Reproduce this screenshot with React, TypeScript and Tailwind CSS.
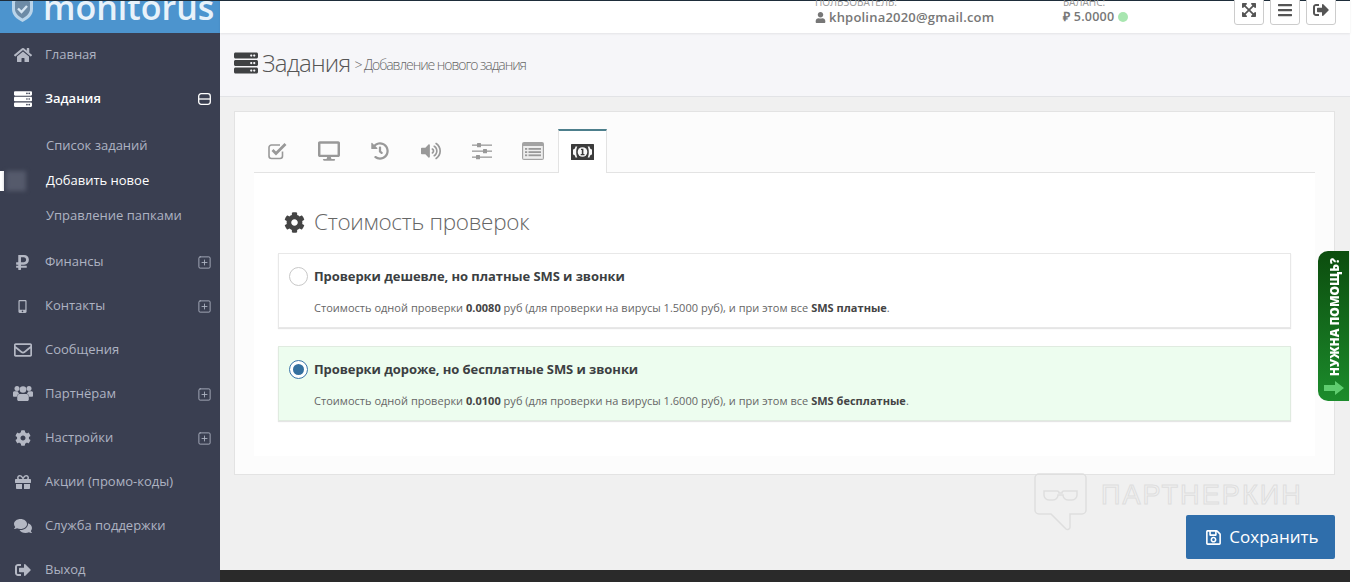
import React from 'react';
import { SquarePlus } from 'lucide-react';
import {
  FaCog,
  FaComments,
  FaDesktop,
  FaExpandArrowsAlt,
  FaBars,
  FaGift,
  FaHistory,
  FaHome,
  FaMobileAlt,
  FaRegEnvelope,
  FaRegSave,
  FaRubleSign,
  FaServer,
  FaSignOutAlt,
  FaUser,
  FaVolumeUp,
} from 'react-icons/fa';

const UsersIcon = ({ size = 20, className }: { size?: number; className?: string }) => (
  <svg width={size} height={size} viewBox="0 0 20 20" fill="currentColor" className={className}>
    <circle cx="4" cy="4.500" r="2.500" />
    <circle cx="16" cy="4.500" r="2.500" />
    <circle cx="10" cy="5.500" r="3.300" />
    <path d="M0 8.500c0-1 1-1.300 2-1.300h2.600c.3 1 1 1.800 1.600 2.300-1.400.7-2.200 1.800-2.400 3.300H1c-.6 0-1-.4-1-1ZM20 8.500c0-1-1-1.300-2-1.300h-2.600c-.3 1-1 1.800-1.600 2.300 1.400.7 2.200 1.800 2.400 3.300H19c.6 0 1-.4 1-1Z" />
    <path d="M6.500 10h7c1.500 0 2.300 1.300 2.300 3v2.500c0 .8-.6 1.500-1.500 1.500H5.700c-.9 0-1.500-.7-1.500-1.500V13c0-1.700.8-3 2.300-3Z" />
  </svg>
);

const CheckIcon = () => (
  <svg width="20" height="18" viewBox="0 0 20 18" fill="none" stroke="currentColor">
    <path d="M14.500 9.500V14a2.500 2.500 0 0 1-2.500 2.500H3.500A2.500 2.500 0 0 1 1 14V5.500A2.500 2.500 0 0 1 3.500 3H12" strokeWidth="1.600" />
    <path d="m4.500 8 3.500 3.500 9.500-9.500" strokeWidth="2.800" />
  </svg>
);

const SlidersIcon = () => (
  <svg width="20" height="18" viewBox="0 0 20 18" fill="currentColor">
    <rect x="0" y="2.500" width="20" height="1.300" />
    <rect x="0" y="8.500" width="20" height="1.300" />
    <rect x="0" y="14.500" width="20" height="1.300" />
    <rect x="5" y="1" width="4" height="4.200" rx="0.500" />
    <rect x="11" y="7" width="4" height="4.200" rx="0.500" />
    <rect x="4" y="13" width="4" height="4.200" rx="0.500" />
  </svg>
);

const ListAltIcon = () => (
  <svg width="22" height="18" viewBox="0 0 22 18">
    <rect x="0" y="0" width="22" height="18" rx="2" fill="#a3a3a3" />
    <rect x="1.200" y="4" width="19.600" height="12.800" fill="#eeeeee" />
    <g fill="#999999">
      <rect x="3" y="6" width="2.200" height="1.800" />
      <rect x="3" y="9.200" width="2.200" height="1.800" />
      <rect x="3" y="12.400" width="2.200" height="1.800" />
      <rect x="6.500" y="6" width="12.500" height="1.800" />
      <rect x="6.500" y="9.200" width="12.500" height="1.800" />
      <rect x="6.500" y="12.400" width="12.500" height="1.800" />
    </g>
  </svg>
);

const MoneyIcon = () => (
  <svg width="23" height="16" viewBox="0 0 23 16">
    <rect width="23" height="16" rx="0.500" fill="#3c3c3c" />
    <path d="M2 5.500c1.300 0 2.200-1 2.500-3h1.800C5.500 4.300 5.200 6 5.200 8s.3 3.700 1.100 5.500H4.500c-.3-2-1.200-3-2.500-3ZM21 5.500c-1.300 0-2.200-1-2.500-3h-1.800c.8 1.800 1.100 3.500 1.100 5.500s-.3 3.700-1.100 5.500h1.800c.3-2 1.200-3 2.500-3Z" fill="#fafafa" />
    <circle cx="11.500" cy="8" r="4.800" fill="#fafafa" />
    <path d="M10 4.800h2.400v5.300h1.100v1.200H9.700v-1.200h1.100V6.100H10Z" fill="#3c3c3c" />
  </svg>
);

const NAV_TOP = [{ label: 'Главная', icon: FaHome, size: 18 }];

const NAV_BOTTOM = [
  { label: 'Финансы', icon: FaRubleSign, size: 17, plus: true },
  { label: 'Контакты', icon: FaMobileAlt, size: 13, plus: true },
  { label: 'Сообщения', icon: FaRegEnvelope, size: 18 },
  { label: 'Партнёрам', icon: UsersIcon, size: 20, plus: true },
  { label: 'Настройки', icon: FaCog, size: 16, plus: true },
  { label: 'Акции (промо-коды)', icon: FaGift, size: 16 },
  { label: 'Служба поддержки', icon: FaComments, size: 18 },
  { label: 'Выход', icon: FaSignOutAlt, size: 16 },
];

const NavItem = ({
  label,
  icon: Icon,
  size,
  plus,
}: {
  label: string;
  icon: React.ElementType;
  size: number;
  plus?: boolean;
}) => (
  <div className="flex h-[44px] shrink-0 items-center text-[13px] text-[#aeb3c2]">
    <div className="flex w-[45px] justify-center">
      <Icon size={size} className="text-[#b4b8c4]" />
    </div>
    <span className="flex-1">{label}</span>
    {plus && <SquarePlus size={15} strokeWidth={1.4} className="mr-[8px]" />}
  </div>
);

const Option = ({
  title,
  price,
  virus,
  sms,
  active,
}: {
  title: string;
  price: string;
  virus: string;
  sms: string;
  active?: boolean;
}) => (
  <div
    className={
      active
        ? 'h-[75px] border border-[#e0ebe0] bg-[#edfdef] pl-[10px] shadow-[0_1px_1px_rgba(0,0,0,0.1)]'
        : 'h-[75px] border border-[#e8e8e8] bg-white pl-[10px] shadow-[0_1px_1px_rgba(0,0,0,0.1)]'
    }
  >
    <div className="flex items-center gap-[6px] pt-[13px]">
      {active ? (
        <span className="flex h-[19px] w-[19px] items-center justify-center rounded-full border border-[#3a74a8] bg-white">
          <span className="h-[11px] w-[11px] rounded-full bg-[#34709f]" />
        </span>
      ) : (
        <span className="h-[19px] w-[19px] rounded-full border border-[#c8c8c8] bg-white" />
      )}
      <span className="-mt-[2px] text-[13px] leading-[18px] font-bold tracking-[-0.07px] text-[#3c3f42]">{title}</span>
    </div>
    <p className="mt-[14px] pl-[25px] text-[11px] leading-[16px] tracking-[0.02px] text-[#666]">
      Стоимость одной проверки <b className="text-[#444]">{price}</b> руб (для проверки на вирусы {virus} руб), и при
      этом все <b className="text-[#444]">SMS {sms}</b>.
    </p>
  </div>
);

export default function App() {
  return (
    <div className="flex h-[582px] w-[1353px] overflow-hidden bg-white font-['Open_Sans',sans-serif]">
      {/* Sidebar */}
      <aside className="flex h-full w-[220px] shrink-0 flex-col overflow-hidden bg-[#3a3f51]">
        <div className="flex h-[33px] shrink-0 items-end overflow-hidden border-t border-[#1e2d3a] bg-[#4c94ce] pl-[12px]">
          <svg width="21" height="26" viewBox="0 0 21 26" className="mb-[11px] shrink-0">
            <path d="M10.500 0 21 3v10c0 6-4.500 10-10.500 13C4.500 23 0 19 0 13V3Z" fill="#b9d4ea" />
            <path d="M10.500 3 18 5.500V13c0 4-3 7-7.500 9.500C6 20 3 17 3 13V5.500Z" fill="#6d8ba6" />
            <path d="m6 12.500 3.500 3.500 5.500-6" fill="none" stroke="#d5e5f2" strokeWidth="2.400" />
          </svg>
          <span className="mb-[7px] ml-[10px] text-[34px] leading-[37px] font-semibold whitespace-nowrap text-[#e8f2fa]">
            monitorus
          </span>
        </div>
        {NAV_TOP.map((item) => (
          <NavItem key={item.label} {...item} />
        ))}
        <div className="flex h-[44px] shrink-0 items-center text-[13px] font-semibold text-white">
          <div className="flex w-[45px] justify-center">
            <FaServer size={18} />
          </div>
          <span className="flex-1">Задания</span>
          <svg width="13" height="12" viewBox="0 0 13 12" fill="none" stroke="currentColor" className="mr-[9px]">
            <rect x="0.700" y="0.700" width="11.600" height="10.600" rx="2.500" strokeWidth="1.300" />
            <path d="M1 6h11" strokeWidth="1.300" />
          </svg>
        </div>
        <div className="shrink-0 pt-[7px] pb-[7px] pl-[46px] text-[13px]">
          <div className="flex h-[35px] items-center text-[#aeb3c2]">Список заданий</div>
          <div className="relative flex h-[35px] items-center text-white">
            Добавить новое
            <span className="absolute top-[8px] left-[-46px] h-[20px] w-[4px] bg-white" />
            <span className="absolute top-[8px] left-[-40px] h-[20px] w-[20px] bg-[#555a6b] blur-[2px]" />
          </div>
          <div className="flex h-[35px] items-center text-[#aeb3c2]">Управление папками</div>
        </div>
        {NAV_BOTTOM.map((item) => (
          <NavItem key={item.label} {...item} />
        ))}
      </aside>

      {/* Main column */}
      <div className="relative flex h-full w-[1130px] flex-col bg-[#f0f0f0]">
        <header className="relative z-10 flex h-[33px] shrink-0 items-start border-t border-[#1e2d3a] bg-white shadow-[0_1px_2px_rgba(0,0,0,0.08)]">
          <div className="ml-[595px] w-[248px] text-[#777]">
            <div className="-mt-[6px] h-[13px] text-[10px] leading-[14px] text-[#999]">ПОЛЬЗОВАТЕЛЬ:</div>
            <div className="flex items-center gap-[3px] text-[13px] leading-[18px] font-semibold tracking-[0.2px]">
              <FaUser size={11} />
              khpolina2020@gmail.com
            </div>
          </div>
          <div className="w-[171px] text-[#777]">
            <div className="-mt-[6px] h-[13px] text-[10px] leading-[14px] text-[#999]">БАЛАНС:</div>
            <div className="flex items-center gap-[4px] text-[12.500px] leading-[18px] font-semibold tracking-[0.25px]">
              ₽ 5.0000
              <span className="h-[10px] w-[10px] rounded-full bg-[#a8e6b0] blur-[0.5px]" />
            </div>
          </div>
          {[FaExpandArrowsAlt, FaBars, FaSignOutAlt].map((Icon, i) => (
            <div
              key={i}
              className="mr-[6px] -mt-[7px] flex h-[31px] w-[30px] items-center justify-center rounded-[3px] border border-[#ccc] bg-white text-[#555]"
            >
              <Icon size={16} />
            </div>
          ))}
        </header>

        <div className="flex h-[64px] shrink-0 items-center gap-[4px] border-b border-[#e2e3e6] bg-[#f6f6f9] pb-[4px] pl-[14px]">
          <FaServer size={24} className="text-[#3f4143]" />
          <h1 className="text-[24px] font-light tracking-[-0.75px] text-[#555]">Задания</h1>
          <span className="pt-[3px] text-[14px] font-light tracking-[-1.050px] text-[#666]">
            &gt; Добавление нового задания
          </span>
        </div>

        <div className="relative flex-1 px-[15px] pt-[14px] pl-[14px]">
          <section className="h-[364px] border border-[#e3e3e3] bg-[#fcfcfc] px-[19px] pt-[17px]">
            <div className="flex h-[44px] border-b border-[#e3e3e3]">
              <div className="-ml-[2px] flex h-[43px] text-[#999]">
                {[
                  <CheckIcon key="check" />,
                  <FaDesktop size={22} key="desktop" />,
                  <FaHistory size={18} key="history" />,
                  <FaVolumeUp size={20} key="volume" />,
                  <SlidersIcon key="sliders" />,
                  <ListAltIcon key="list" />,
                ].map((icon) => (
                  <div key={icon.key} className="flex h-[43px] w-[51px] items-center justify-center">
                    {icon}
                  </div>
                ))}
              </div>
              <div className="flex h-[44px] w-[49px] items-center justify-center border-x border-t-2 border-x-[#e3e3e3] border-t-[#4d7f8c] bg-white">
                <MoneyIcon />
              </div>
            </div>
            <div className="h-[283px] bg-white px-[24px]">
              <div className="flex h-[80px] items-center gap-[9px] pt-[18px] pl-[6px]">
                <FaCog size={21} className="text-[#444]" />
                <h2 className="text-[22.500px] font-light tracking-[-0.3px] text-[#666]">Стоимость проверок</h2>
              </div>
              <div className="flex flex-col gap-[18px]">
                <Option
                  title="Проверки дешевле, но платные SMS и звонки"
                  price="0.0080"
                  virus="1.5000"
                  sms="платные"
                />
                <Option
                  active
                  title="Проверки дороже, но бесплатные SMS и звонки"
                  price="0.0100"
                  virus="1.6000"
                  sms="бесплатные"
                />
              </div>
            </div>
          </section>

          <div className="mt-[40px] flex justify-end">
            <button className="flex h-[44px] w-[149px] items-center justify-center gap-[7px] rounded-[2px] bg-[#2f6eab] pl-[3px] text-[17px] text-white">
              <FaRegSave size={17} />
              Сохранить
            </button>
          </div>

          {/* Watermark */}
          <div className="absolute top-[376px] left-[814px] flex items-center gap-[14px]">
            <svg width="53" height="58" viewBox="0 0 53 58" fill="none" stroke="#dedede" strokeWidth="1.500">
              <path d="M5 1h43a4 4 0 0 1 4 4v32a4 4 0 0 1-4 4H36v13a2.500 2.500 0 0 1-4 2L17 41H5a4 4 0 0 1-4-4V5a4 4 0 0 1 4-4Z" />
              <path d="M10 18h13a2 2 0 0 1 2 2h3a2 2 0 0 1 2-2h13v4a5 5 0 0 1-5 5h-4a5 5 0 0 1-5-5h-5a5 5 0 0 1-5 5h-4a5 5 0 0 1-5-5Z" />
            </svg>
            <span className="-mt-[15px] font-['Liberation_Sans',sans-serif] text-[27px] leading-[30px] tracking-[2.100px] text-transparent [-webkit-text-stroke:1px_#dedede]">
              ПАРТНЕРКИН
            </span>
          </div>
        </div>

        <div className="h-[12px] shrink-0 bg-[#2a2a2a]" />

        {/* Help tab */}
        <div className="absolute top-[251px] left-[1098px] flex h-[150px] w-[31px] flex-col items-center justify-between rounded-l-[10px] bg-gradient-to-b from-[#0c4d0e] to-[#1c8c2c] pt-[7px] pb-[6px] pl-[3px]">
          <span className="rotate-180 text-[12px] leading-[14px] font-extrabold whitespace-nowrap text-white [writing-mode:vertical-rl]">
            НУЖНА ПОМОЩЬ?
          </span>
          <svg width="20" height="14" viewBox="0 0 20 14" fill="#5fcc6f" className="-ml-[2px]">
            <path d="M0 4h11V0l9 7-9 7v-4H0Z" />
          </svg>
        </div>
      </div>

      <div className="h-full flex-1 bg-white" />
    </div>
  );
}
